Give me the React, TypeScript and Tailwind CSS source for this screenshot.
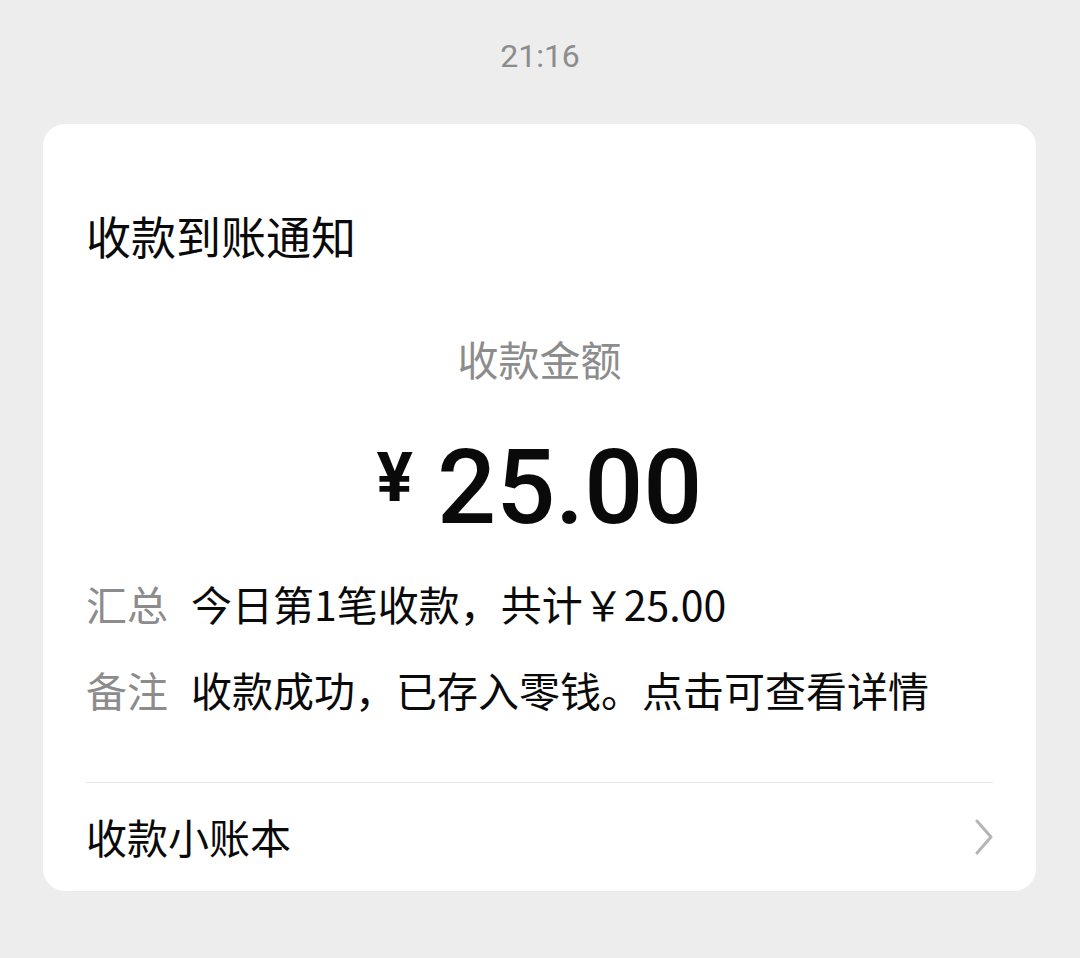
const cjk = "font-['Noto_Sans_CJK_SC',sans-serif]"

function Row({ label, value }: { label: string; value: string }) {
  return (
    <div className="flex h-[86px] items-center">
      <span className="w-[105px] shrink-0 text-[#8c8c8c]">{label}</span>
      <span className="text-[#0a0a0a]">{value}</span>
    </div>
  )
}

export default function App() {
  return (
    <main className={`min-h-screen bg-[#ededed] ${cjk}`}>
      <div className="pt-[34px] text-center font-['Roboto',sans-serif] text-[32px] leading-[44px] text-[#8c8c8c]">
        21:16
      </div>

      <section className="mx-[43px] mt-[46px] w-[993px] rounded-[22px] bg-white">
        <div className="px-[43px]">
          <h1 className="pt-[82px] text-[45px] leading-[60px] text-[#0a0a0a]">
            收款到账通知
          </h1>

          <p className="mt-[64px] text-center text-[41px] leading-[56px] text-[#8c8c8c]">
            收款金额
          </p>

          <div className="mt-[50px] flex justify-center font-['Roboto',sans-serif] text-[#0a0a0a]">
            <span className="mt-[8px] text-[68px] font-bold leading-none">¥</span>
            <span className="ml-[24px] text-[104px] font-medium leading-none">
              25.00
            </span>
          </div>

          <div className="mt-[21px] text-[41px]">
            <Row label="汇总" value="今日第1笔收款，共计￥25.00" />
            <Row label="备注" value="收款成功，已存入零钱。点击可查看详情" />
          </div>

          <div className="mt-[49px] h-px bg-[#e5e5e5]" />

          <div className="flex h-[108px] items-center justify-between">
            <span className="text-[41px] text-[#0a0a0a]">收款小账本</span>
            <svg width="20" height="36" viewBox="0 0 20 36" className="mr-[-1px]">
              <polyline
                points="3,2 17,18 3,34"
                fill="none"
                stroke="#b5b5b5"
                strokeWidth="3"
                strokeLinecap="round"
                strokeLinejoin="round"
              />
            </svg>
          </div>
        </div>
      </section>
    </main>
  )
}
